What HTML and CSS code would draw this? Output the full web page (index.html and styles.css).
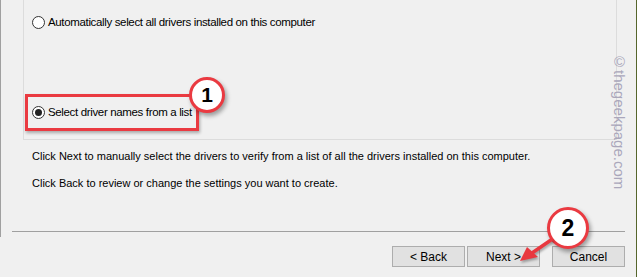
FILE: index.html
```html
<!DOCTYPE html>
<html lang="en">
<head>
  <meta charset="UTF-8">
  <title>Driver Verifier Manager</title>
  <link rel="stylesheet" href="styles.css">
</head>
<body>
  <div class="wizard">
    <div class="main">
      <div class="group">
        <label class="radio-row first">
          <span class="radio"></span>
          <span>Automatically select all drivers installed on this computer</span>
        </label>
        <label class="radio-row second">
          <span class="radio checked"></span>
          <span>Select driver names from a list</span>
        </label>
      </div>

      <div class="desc">
        <p>Click Next to manually select the drivers to verify from a list of all the drivers installed on this computer.</p>
        <p>Click Back to review or change the settings you want to create.</p>
      </div>

      <div class="separator"></div>
    </div>

    <div class="buttons">
      <button class="btn">&lt; Back</button>
      <button class="btn">Next &gt;</button>
      <button class="btn cancel">Cancel</button>
    </div>

    <!-- annotations drawn over the dialog -->
    <div class="highlight"></div>
    <div class="callout one">1</div>
    <div class="callout two">2</div>
    <svg class="arrow" width="637" height="277" viewBox="0 0 637 277">
      <line x1="551" y1="240" x2="532" y2="253" stroke="#e8383f" stroke-width="3.5" stroke-linecap="round"/>
      <polygon points="520,261 527,247 538,257" fill="#e8383f"/>
    </svg>
    <div class="watermark">©thegeekpage.com</div>
  </div>
</body>
</html>
```

FILE: styles.css
```css
* {
  margin: 0;
  padding: 0;
  box-sizing: border-box;
}

body {
  width: 637px;
  height: 277px;
  overflow: hidden;
  background: #f0f0f0;
  font-family: 'Liberation Sans', Arial, sans-serif;
  font-size: 11px;
  color: #000;
}

.wizard {
  position: relative;
  width: 637px;
  height: 277px;
  display: flex;
  flex-direction: column;
  border-right: 1px solid #56662c;
}

.main {
  height: 237px;
  border-left: 1px solid #a0a0a0;
  display: flex;
  flex-direction: column;
}

.group {
  margin-left: 22px;
  width: 594px;
  height: 140px;
  border: 1px solid #dcdcdc;
  border-top: none;
  padding-left: 8px;
  display: flex;
  flex-direction: column;
}

.radio-row {
  display: flex;
  align-items: center;
  gap: 3px;
  height: 16px;
  font-size: 11.5px;
  letter-spacing: -0.35px;
}

.radio-row.first {
  margin-top: 14px;
}

.radio-row.second {
  margin-top: 74px;
}

.radio {
  width: 13px;
  height: 13px;
  border: 1px solid #333;
  border-radius: 50%;
  background: #fff;
  display: flex;
  align-items: center;
  justify-content: center;
}

.radio.checked::after {
  content: '';
  width: 7px;
  height: 7px;
  border-radius: 50%;
  background: #222;
}

.desc {
  padding-left: 31px;
  margin-top: 8px;
  display: flex;
  flex-direction: column;
  gap: 11px;
}

.desc p {
  line-height: 16px;
}

.separator {
  margin-top: 40px;
  margin-left: 11px;
  width: 613px;
  border-top: 1px solid #a0a0a0;
}

.buttons {
  margin-top: 9px;
  padding-right: 11px;
  display: flex;
  justify-content: flex-end;
  gap: 2px;
}

.btn {
  width: 73px;
  height: 21px;
  border: 1px solid #adadad;
  background: #e1e1e1;
  font-family: inherit;
  font-size: 12px;
  color: #000;
}

.btn.cancel {
  margin-left: 10px;
}

.highlight {
  position: absolute;
  left: 25px;
  top: 94px;
  width: 174px;
  height: 37px;
  border: 3px solid #ea3a41;
  box-shadow: 1px 2px 3px rgba(0, 0, 0, 0.3);
}

.callout {
  position: absolute;
  border: 3px solid #ea3a41;
  border-radius: 50%;
  background: #fff;
  box-shadow: 2px 3px 4px rgba(0, 0, 0, 0.35);
  display: flex;
  align-items: center;
  justify-content: center;
  font-weight: bold;
  color: #000;
}

.callout.one {
  left: 189px;
  top: 77px;
  width: 36px;
  height: 36px;
  font-size: 21px;
}

.callout.two {
  left: 547px;
  top: 207px;
  width: 42px;
  height: 42px;
  font-size: 23px;
}

.arrow {
  position: absolute;
  left: 0;
  top: 0;
  pointer-events: none;
  filter: drop-shadow(1px 2px 1px rgba(0, 0, 0, 0.3));
}

.watermark {
  position: absolute;
  left: 611px;
  top: 53px;
  writing-mode: vertical-rl;
  font-size: 15px;
  color: #aaa7bb;
}
```
